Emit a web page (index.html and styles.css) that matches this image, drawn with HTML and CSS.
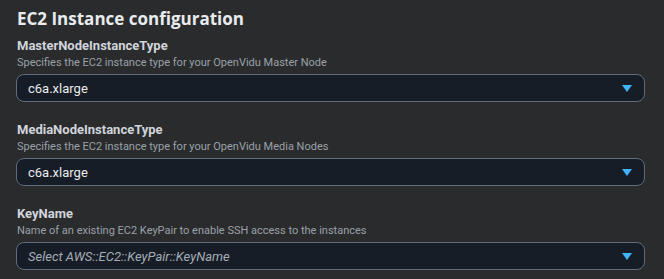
FILE: index.html
```html
<!DOCTYPE html>
<html lang="en">
<head>
    <meta charset="UTF-8">
    <meta name="viewport" content="width=device-width, initial-scale=1.0">
    <title>EC2 Instance configuration</title>
    <link rel="stylesheet" href="styles.css">
</head>
<body>
    <section class="panel">
        <h2 class="title">EC2 Instance configuration</h2>
        <div class="field">
            <div class="label">MasterNodeInstanceType</div>
            <div class="desc">Specifies the EC2 instance type for your OpenVidu Master Node</div>
            <div class="select">
                <span class="value">c6a.xlarge</span>
                <span class="caret"></span>
            </div>
        </div>
        <div class="field">
            <div class="label">MediaNodeInstanceType</div>
            <div class="desc">Specifies the EC2 instance type for your OpenVidu Media Nodes</div>
            <div class="select">
                <span class="value">c6a.xlarge</span>
                <span class="caret"></span>
            </div>
        </div>
        <div class="field">
            <div class="label">KeyName</div>
            <div class="desc">Name of an existing EC2 KeyPair to enable SSH access to the instances</div>
            <div class="select">
                <span class="value placeholder">Select AWS::EC2::KeyPair::KeyName</span>
                <span class="caret"></span>
            </div>
        </div>
    </section>
</body>
</html>
```

FILE: styles.css
```css
body {
    margin: 0;
    background-color: #2a2b2d;
    font-family: Roboto, "Noto Sans", sans-serif;
    color: #e9ebed;
}
.panel {
    padding: 8px 19px 0 16px;
}
.title {
    margin: 0 0 7px 1px;
    font-family: "Open Sans", "Noto Sans", sans-serif;
    font-size: 17px;
    line-height: 22px;
    font-weight: 700;
    color: #e9ebed;
}
.field {
    margin-bottom: 19px;
}
.label {
    margin-left: 1px;
    font-size: 13px;
    line-height: 18px;
    font-weight: 700;
    color: #d1d5db;
}
.desc {
    margin: 0 0 3px 1px;
    font-size: 11px;
    line-height: 16px;
    color: #9ba1a8;
}
.select {
    display: flex;
    align-items: center;
    justify-content: space-between;
    height: 26px;
    padding: 0 12px 0 11px;
    border: 1px solid #5f6b7a;
    border-radius: 8px;
    background-color: #161d26;
}
.value {
    font-size: 13px;
    color: #e9ebed;
}
.placeholder {
    font-style: italic;
    color: #a4acb5;
}
.caret {
    width: 0;
    height: 0;
    border-left: 5px solid transparent;
    border-right: 5px solid transparent;
    border-top: 7px solid #42b4ff;
}
```
